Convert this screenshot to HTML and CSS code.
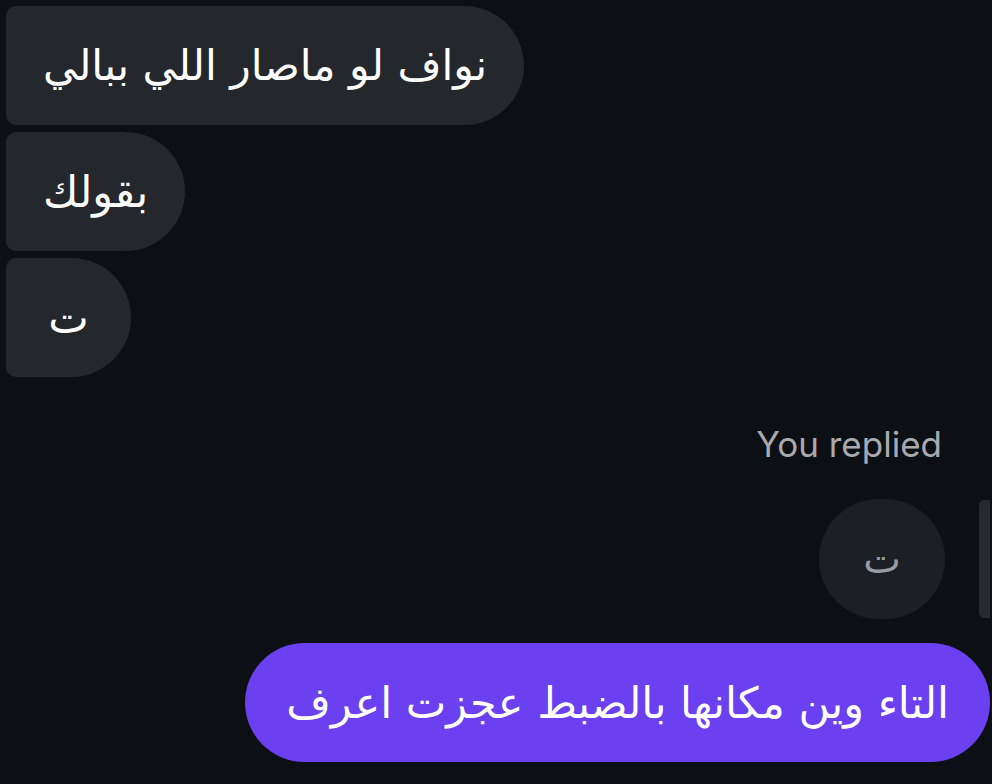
FILE: index.html
```html
<!DOCTYPE html>
<html lang="ar">
<head>
  <meta charset="UTF-8">
  <title>Chat</title>
  <link rel="stylesheet" href="styles.css">
</head>
<body>

  <div class="thread">
    <div class="msg in" dir="rtl">نواف لو ماصار اللي ببالي</div>
    <div class="msg in" dir="rtl">بقولك</div>
    <div class="msg in" dir="rtl">ت</div>

    <div class="reply-label">You replied</div>
    <div class="quote-row">
      <div class="msg quoted" dir="rtl">ت</div>
      <div class="scroll-thumb"></div>
    </div>
    <div class="msg out" dir="rtl">التاء وين مكانها بالضبط عجزت اعرف</div>
  </div>

</body>
</html>
```

FILE: styles.css
```css
body {
  margin: 0;
  background: #0c0f13;
  color: #fff;
  font-family: 'DejaVu Sans', sans-serif;
}
.thread {
  display: flex;
  flex-direction: column;
  padding: 6px 2px 0 6px;
  height: 778px;
  overflow: hidden;
}
.msg {
  box-sizing: border-box;
  height: 119px;
  display: flex;
  align-items: center;
  justify-content: center;
  padding: 0 37px;
  font-size: 43px;
  white-space: nowrap;
}
.in {
  align-self: flex-start;
  min-width: 125px;
  background: #24272b;
  border-radius: 10px 60px 60px 10px;
  margin-bottom: 7px;
}
.in:first-child {
  font-size: 42.5px;
}
.reply-label {
  align-self: flex-end;
  margin: 40px 48px 0 0;
  font-family: 'Inter', sans-serif;
  font-size: 35px;
  line-height: 40px;
  color: #a8aaaf;
}
.quote-row {
  position: relative;
  align-self: stretch;
  display: flex;
  justify-content: flex-end;
  margin-top: 35px;
}
.quoted {
  width: 126px;
  height: 120px;
  padding: 0;
  margin-right: 45px;
  border-radius: 60px;
  background: #1c1f23;
  color: #9a9ca1;
  font-size: 40px;
}
.scroll-thumb {
  position: absolute;
  right: 0;
  top: 1px;
  width: 11px;
  height: 118px;
  border-radius: 5px 0 0 5px;
  background: #26292d;
}
.out {
  align-self: flex-end;
  margin-top: 24px;
  padding: 0 41px;
  border-radius: 60px;
  background: #6a40f0;
}
```
